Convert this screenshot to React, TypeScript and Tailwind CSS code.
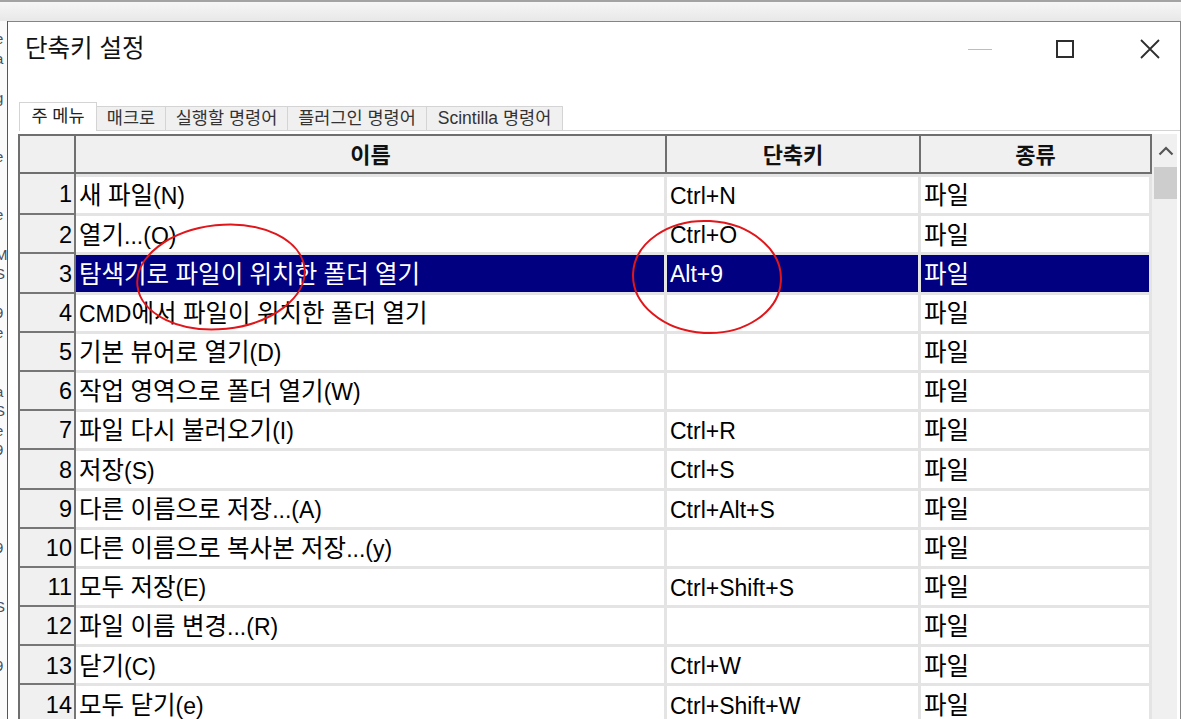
import React from "react";

type Row = { name: string; keys: string; kind: string; selected?: boolean };

const rows: Row[] = [
  { name: "새 파일(N)", keys: "Ctrl+N", kind: "파일" },
  { name: "열기...(O)", keys: "Ctrl+O", kind: "파일" },
  { name: "탐색기로 파일이 위치한 폴더 열기", keys: "Alt+9", kind: "파일", selected: true },
  { name: "CMD에서 파일이 위치한 폴더 열기", keys: "", kind: "파일" },
  { name: "기본 뷰어로 열기(D)", keys: "", kind: "파일" },
  { name: "작업 영역으로 폴더 열기(W)", keys: "", kind: "파일" },
  { name: "파일 다시 불러오기(I)", keys: "Ctrl+R", kind: "파일" },
  { name: "저장(S)", keys: "Ctrl+S", kind: "파일" },
  { name: "다른 이름으로 저장...(A)", keys: "Ctrl+Alt+S", kind: "파일" },
  { name: "다른 이름으로 복사본 저장...(y)", keys: "", kind: "파일" },
  { name: "모두 저장(E)", keys: "Ctrl+Shift+S", kind: "파일" },
  { name: "파일 이름 변경...(R)", keys: "", kind: "파일" },
  { name: "닫기(C)", keys: "Ctrl+W", kind: "파일" },
  { name: "모두 닫기(e)", keys: "Ctrl+Shift+W", kind: "파일" },
];

const tabs = [
  { label: "주 메뉴", w: "w-[78px]", active: true },
  { label: "매크로", w: "w-[70px]" },
  { label: "실행할 명령어", w: "w-[123px]" },
  { label: "플러그인 명령어", w: "w-[140px]" },
  { label: "Scintilla 명령어", w: "w-[137px]" },
];

// bits of the editor window peeking out behind the dialog
const behind = ["e", "a", "I", "g", "", "", "e", "'", "I", "e", "", "M", "S", "", "9", "e", "t", "'", "a", "S", "e", "9", "", "(", "", "", "9", "", "", "S", "", "", "9", "", ""];

// hangul in the original font runs wider than latin, so bump it a little
function Txt({ s }: { s: string }) {
  const parts = s.split(/([가-힣]+)/);
  return (
    <span className="whitespace-nowrap leading-none">
      {parts.map((p, i) =>
        /[가-힣]/.test(p) ? (
          <span key={i} className="text-[24.5px]">
            {p}
          </span>
        ) : (
          <span key={i}>{p}</span>
        )
      )}
    </span>
  );
}

function WindowButtons() {
  return (
    <div className="ml-auto flex h-full items-center">
      <div className="flex h-full w-[86px] items-center justify-center">
        <span className="block h-px w-[24px] bg-[#bdbdbd]" />
      </div>
      <div className="flex h-full w-[86px] items-center justify-center pr-[3px]">
        <span className="block h-[18px] w-[18px] border-2 border-[#2e2e2e]" />
      </div>
      <div className="flex h-full w-[71px] items-center justify-center pl-[11px]">
        <svg width="20" height="20" viewBox="0 0 20 20">
          <path d="M1 1 L19 19 M19 1 L1 19" stroke="#2e2e2e" strokeWidth="1.8" fill="none" />
        </svg>
      </div>
    </div>
  );
}

function Tabs() {
  return (
    <div className="ml-[11px] mt-[26px] flex h-[29px] items-end">
      {tabs.map((t) =>
        t.active ? (
          <div
            key={t.label}
            className={`${t.w} flex h-[29px] items-center justify-center border border-b-0 border-[#d4d4d4] bg-white pb-[2px] text-[17.5px] text-[#222]`}
          >
            {t.label}
          </div>
        ) : (
          <div
            key={t.label}
            className={`${t.w} -ml-px flex h-[25px] items-center justify-center border border-[#d4d4d4] bg-[#f0f0f0] text-[17.5px] text-[#333]`}
          >
            {t.label}
          </div>
        )
      )}
      <div className="flex-1 border-b border-[#d4d4d4]" />
    </div>
  );
}

function Grid() {
  const head =
    "flex items-center justify-center border-r-2 border-b-2 border-[#6f6f6f] bg-[#f0f0f0] pt-[2px] text-[22px] font-bold text-[#111]";
  return (
    <div className="ml-[10px] mt-[3px] flex flex-1 overflow-hidden">
      <div className="flex shrink-0 flex-col border-l-2 border-t-2 border-[#6f6f6f]">
        <div className="flex h-[38px] shrink-0">
          <div className={`${head} w-[56px]`} />
          <div className={`${head} w-[591px]`}>이름</div>
          <div className={`${head} w-[254px]`}>단축키</div>
          <div className={`${head} w-[231px]`}>종류</div>
        </div>
        {rows.map((r, i) => {
          const cell = r.selected
            ? "flex items-center border-r-[3px] border-t-[3px] border-[#e4e4e4] bg-[#000080] pl-[3px] pt-[3px] text-white"
            : "flex items-center border-r-[3px] border-t-[3px] border-[#e4e4e4] bg-white pl-[3px] pt-[3px] text-black";
          return (
            <div key={i} className="flex h-[39.2px] shrink-0 text-[23px] leading-none">
              <div
                className={`flex w-[56px] items-center justify-end border-r-2 border-[#767676] bg-[#f0f0f0] pr-[2px] pt-[3px] text-[23.5px] text-black ${
                  i === 0 ? "" : "border-t-2"
                }`}
              >
                {i + 1}
              </div>
              <div className={`${cell} w-[591px]`}>
                <Txt s={r.name} />
              </div>
              <div className={`${cell} w-[254px]`}>
                <Txt s={r.keys} />
              </div>
              <div className={`${cell} w-[231px]`}>
                <Txt s={r.kind} />
              </div>
            </div>
          );
        })}
      </div>
      <div className="flex w-[25px] flex-col bg-[#f0f0f0]">
        <div className="flex h-[33px] items-center justify-center pl-[2px]">
          <svg width="16" height="10" viewBox="0 0 16 10">
            <path d="M1.5 8.5 L8 2 L14.5 8.5" stroke="#555" strokeWidth="2.2" fill="none" />
          </svg>
        </div>
        <div className="ml-[2px] h-[32px] bg-[#cdcdcd]" />
      </div>
    </div>
  );
}

export default function App() {
  return (
    <div className="relative h-[719px] w-[1181px] overflow-hidden bg-white font-['Liberation_Sans','Noto_Sans_CJK_KR',sans-serif]">
      <div className="h-[21px] border-t-2 border-[#a3a3a3] bg-gradient-to-b from-[#f6f6f6] to-[#e8e8e8]" />
      <div className="flex h-[698px]">
        <div className="w-[8px] overflow-hidden border-r border-[#555] bg-[#fafafa]">
          <div className="-ml-[5px] pt-[8px] text-[15px] leading-[19.6px] text-[#4a5060]">
            {behind.map((c, i) => (
              <div key={i} className="h-[19.6px]">
                {c}
              </div>
            ))}
          </div>
        </div>
        <div className="flex flex-1 flex-col border-t border-r border-[#858585] bg-white">
          <div className="flex h-[54px] items-center">
            <span className="ml-[17px] text-[24.5px] leading-none text-[#111]">단축키 설정</span>
            <WindowButtons />
          </div>
          <Tabs />
          <Grid />
        </div>
      </div>
      <svg className="pointer-events-none absolute left-0 top-0" width="1181" height="719" viewBox="0 0 1181 719">
        <ellipse cx="221" cy="277" rx="84" ry="52" transform="rotate(-6 221 277)" fill="none" stroke="#e0161b" strokeWidth="2" />
        <ellipse cx="707" cy="277" rx="74" ry="56" transform="rotate(3 707 277)" fill="none" stroke="#e0161b" strokeWidth="2" />
      </svg>
    </div>
  );
}
